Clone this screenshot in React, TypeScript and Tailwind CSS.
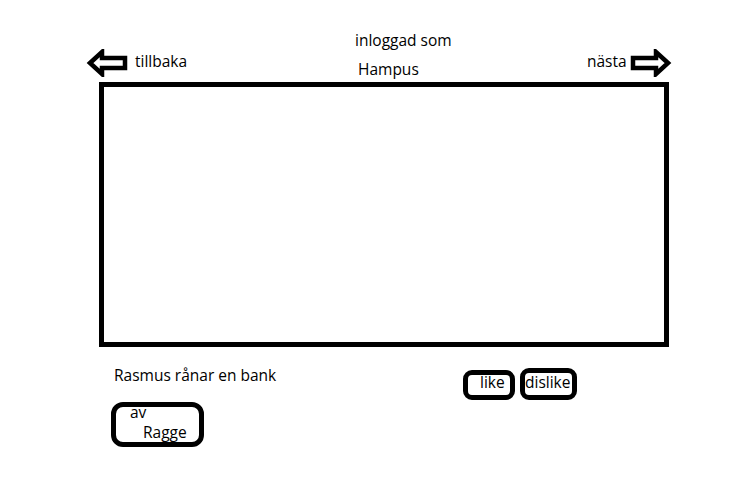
import React from "react";

function ArrowLeft() {
  return (
    <svg width="42" height="28" viewBox="0 0 42 28" className="shrink-0">
      <polygon
        points="4,14 16,3 16,9 39,9 39,19 16,19 16,25"
        fill="white"
        stroke="black"
        strokeWidth="4.5"
        strokeLinejoin="miter"
      />
    </svg>
  );
}

function ArrowRight() {
  return (
    <svg width="42" height="28" viewBox="0 0 42 28" className="shrink-0">
      <polygon
        points="38,14 26,3 26,9 3,9 3,19 26,19 26,25"
        fill="white"
        stroke="black"
        strokeWidth="4.5"
        strokeLinejoin="miter"
      />
    </svg>
  );
}

export default function App() {
  return (
    <div className="w-[729px] h-[496px] bg-white text-black text-[15.5px] leading-[20px] font-['Open_Sans',sans-serif] overflow-hidden">
      {/* topp: tillbaka / inloggad / nästa */}
      <div className="flex items-start h-[82px]">
        <div className="ml-[86px] w-[269px] mt-[49px] flex items-start">
          <ArrowLeft />
          <span className="ml-[7px] mt-[2px]">tillbaka</span>
        </div>
        <div className="w-[232px] mt-[30px] flex flex-col">
          <span>inloggad som</span>
          <span className="ml-[3px] mt-[9px]">Hampus</span>
        </div>
        <div className="w-[85px] mt-[49px] flex items-start justify-between">
          <span className="mt-[2px]">nästa</span>
          <ArrowRight />
        </div>
      </div>

      {/* innehåll */}
      <div className="ml-[99px] w-[570px] h-[265px] border-[5px] border-black" />

      {/* botten */}
      <div className="flex items-start">
        <div className="ml-[111px] w-[352px] flex flex-col">
          <span className="ml-[3px] mt-[18px]">Rasmus rånar en bank</span>
          <div className="mt-[17px] w-[93px] h-[45px] border-[5px] border-black rounded-[12px] flex flex-col">
            <span className="-mt-[5px] ml-[14px]">av</span>
            <span className="ml-[27px]">Ragge</span>
          </div>
        </div>
        <div className="mt-[23px] w-[52px] h-[30px] border-[5px] border-black rounded-[9px] flex items-start leading-[14px]">
          <span className="ml-[12px]">like</span>
        </div>
        <div className="ml-[5px] mt-[21px] w-[57px] h-[32px] border-[5px] border-black rounded-[9px] flex items-start leading-[14px]">
          <span className="mt-[2px]">dislike</span>
        </div>
      </div>
    </div>
  );
}
